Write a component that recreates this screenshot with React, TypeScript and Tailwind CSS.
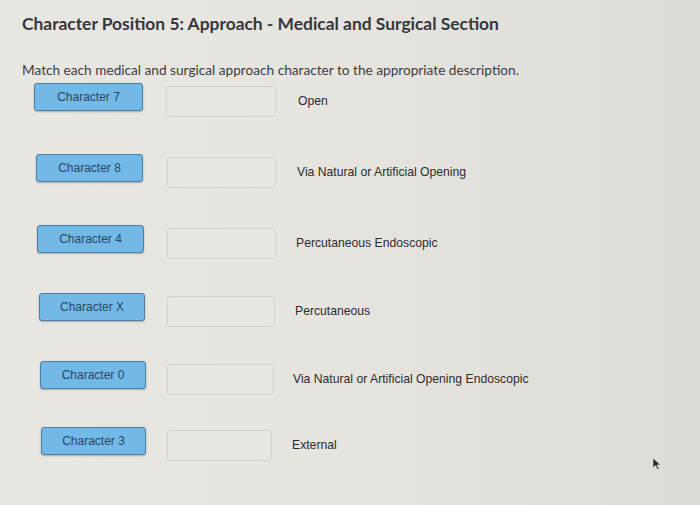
const rows = [
  { ch: "Character 7", label: "Open", btn: "ml-[34px] w-[109px]", box: "ml-[23px] w-[110px]", text: "ml-[22px]", gap: "" },
  { ch: "Character 8", label: "Via Natural or Artificial Opening", btn: "ml-[36px] w-[107px]", box: "ml-[24px] w-[109px]", text: "ml-[21px]", gap: "mt-[40px]" },
  { ch: "Character 4", label: "Percutaneous Endoscopic", btn: "ml-[37px] w-[107px]", box: "ml-[23px] w-[109px]", text: "ml-[20px]", gap: "mt-[40px]" },
  { ch: "Character X", label: "Percutaneous", btn: "ml-[39px] w-[106px]", box: "ml-[22px] w-[108px]", text: "ml-[20px]", gap: "mt-[37px]" },
  { ch: "Character 0", label: "Via Natural or Artificial Opening Endoscopic", btn: "ml-[40px] w-[106px]", box: "ml-[21px] w-[107px]", text: "ml-[19px]", gap: "mt-[37px]" },
  { ch: "Character 3", label: "External", btn: "ml-[41px] w-[105px]", box: "ml-[21px] w-[105px]", text: "ml-[20px]", gap: "mt-[35px]" },
]

export default function App() {
  return (
    <div className="w-[700px] h-[505px] overflow-hidden bg-gradient-to-r from-[#e9e7e2] via-[#e6e4df] to-[#dedcd6] font-['Liberation_Sans',Arial,sans-serif] relative">
      <h1 className="pl-[22px] pt-[12px] text-[17.4px] leading-[24px] font-bold text-[#36363d] font-['Lato',sans-serif]">
        Character Position 5: Approach - Medical and Surgical Section
      </h1>
      <p className="pl-[22px] pt-[24px] text-[13.65px] leading-[20px] text-[#3c3c40] font-['Lato',sans-serif]">
        Match each medical and surgical approach character to the appropriate description.
      </p>
      <div className="flex flex-col mt-[3px]">
        {rows.map((r) => (
          <div key={r.ch} className={`flex items-center h-[31px] ${r.gap}`}>
            <div className={`${r.btn} h-[28px] self-start rounded-[3px] border border-[#4b7fa6] bg-[#72b9e7] shadow-[0_1px_2px_rgba(0,0,0,0.25)] flex items-center justify-center text-[12px] text-[#2a4763]`}>
              {r.ch}
            </div>
            <div className={`${r.box} h-[31px] mt-[3px] self-start rounded-[3px] border border-[#d3d1cb] bg-[#e8e6e1]`} />
            <div className={`${r.text} text-[12.2px] text-[#2c2c2e] mt-[5px]`}>{r.label}</div>
          </div>
        ))}
      </div>
      <svg className="absolute left-[652px] top-[457px]" width="10" height="13" viewBox="0 0 10 13">
        <path d="M1 1 L1 11 L3.5 8.5 L5.5 12.5 L7 11.8 L5 8 L8.5 8 Z" fill="#2a2a2a" stroke="#e6e4df" strokeWidth="0.6" />
      </svg>
    </div>
  )
}
